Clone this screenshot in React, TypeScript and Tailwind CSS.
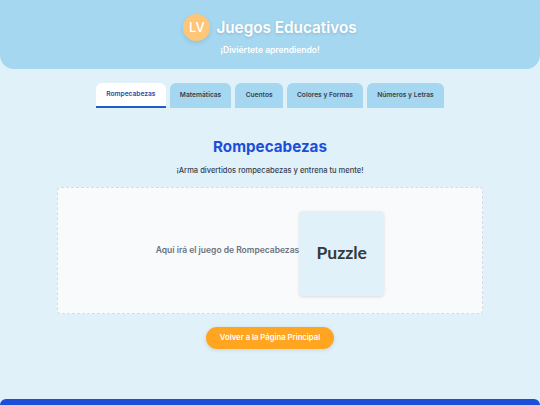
const tabs = ['Rompecabezas', 'Matemáticas', 'Cuentos', 'Colores y Formas', 'Números y Letras'];

export default function App() {
  return (
    <div className="flex h-[405px] flex-col overflow-hidden bg-[#e0f1f9] font-['Inter',sans-serif]">
      <header className="flex h-[69px] shrink-0 flex-col items-center rounded-b-[14px] bg-[#a5d7f0] pt-[14px]">
        <div className="flex items-center gap-[6px]">
          <div className="flex h-[27px] w-[27px] items-center justify-center rounded-full bg-[#ffc677] text-[13px] font-medium text-white shadow-[0_2px_5px_rgba(0,0,0,0.1)]">
            LV
          </div>
          <h1 className="text-[15.3px] leading-[27px] font-semibold text-white [text-shadow:0_1px_3px_rgba(0,0,0,0.15)]">
            Juegos Educativos
          </h1>
        </div>
        <p className="mt-[3px] text-[8.5px] leading-[12px] font-semibold text-white">¡Diviértete aprendiendo!</p>
      </header>

      <nav className="mt-[14px] flex justify-center gap-[4px]">
        {tabs.map((tab, i) => (
          <button
            key={tab}
            className={
              i === 0
                ? 'h-[25px] rounded-t-[6px] border-b-2 border-[#1d5fc0] bg-white px-[10.2px] text-[6.65px] font-semibold text-[#1d4fa8]'
                : 'h-[25px] rounded-t-[6px] bg-[#a5d7f0] px-[10.2px] text-[6.65px] font-semibold text-[#374151]'
            }
          >
            {tab}
          </button>
        ))}
      </nav>

      <main className="flex flex-1 flex-col items-center">
        <h2 className="mt-[28px] text-[15.2px] leading-[22px] font-bold text-[#1d4ed8]">Rompecabezas</h2>
        <p className="mt-[7px] text-[7.55px] leading-[12px] font-medium text-[#374151]">¡Arma divertidos rompecabezas y entrena tu mente!</p>
        <div className="mt-[10px] flex h-[127px] w-[426px] items-center justify-center rounded-[4px] border border-dashed border-[#d3dde6] bg-[#f9fafc]">
          <span className="text-[8.5px] font-semibold text-[#6b7280]">Aquí irá el juego de Rompecabezas</span>
          <div className="mt-[6px] flex h-[85px] w-[85px] items-center justify-center rounded-[4px] bg-[#e0f1f9] font-['Lato',sans-serif] text-[17.5px] font-bold text-[#333a40] shadow-[0_1px_3px_rgba(0,0,0,0.12)]">
            Puzzle
          </div>
        </div>
        <button className="mt-[13px] h-[22px] w-[128px] rounded-full bg-[#ffa51f] text-[7.7px] font-semibold text-white shadow-[0_1px_4px_rgba(0,0,0,0.12)]">
          Volver a la Página Principal
        </button>
      </main>

      <footer className="h-[6px] shrink-0 rounded-t-[6px] bg-[#1d4ed8]" />
    </div>
  );
}
